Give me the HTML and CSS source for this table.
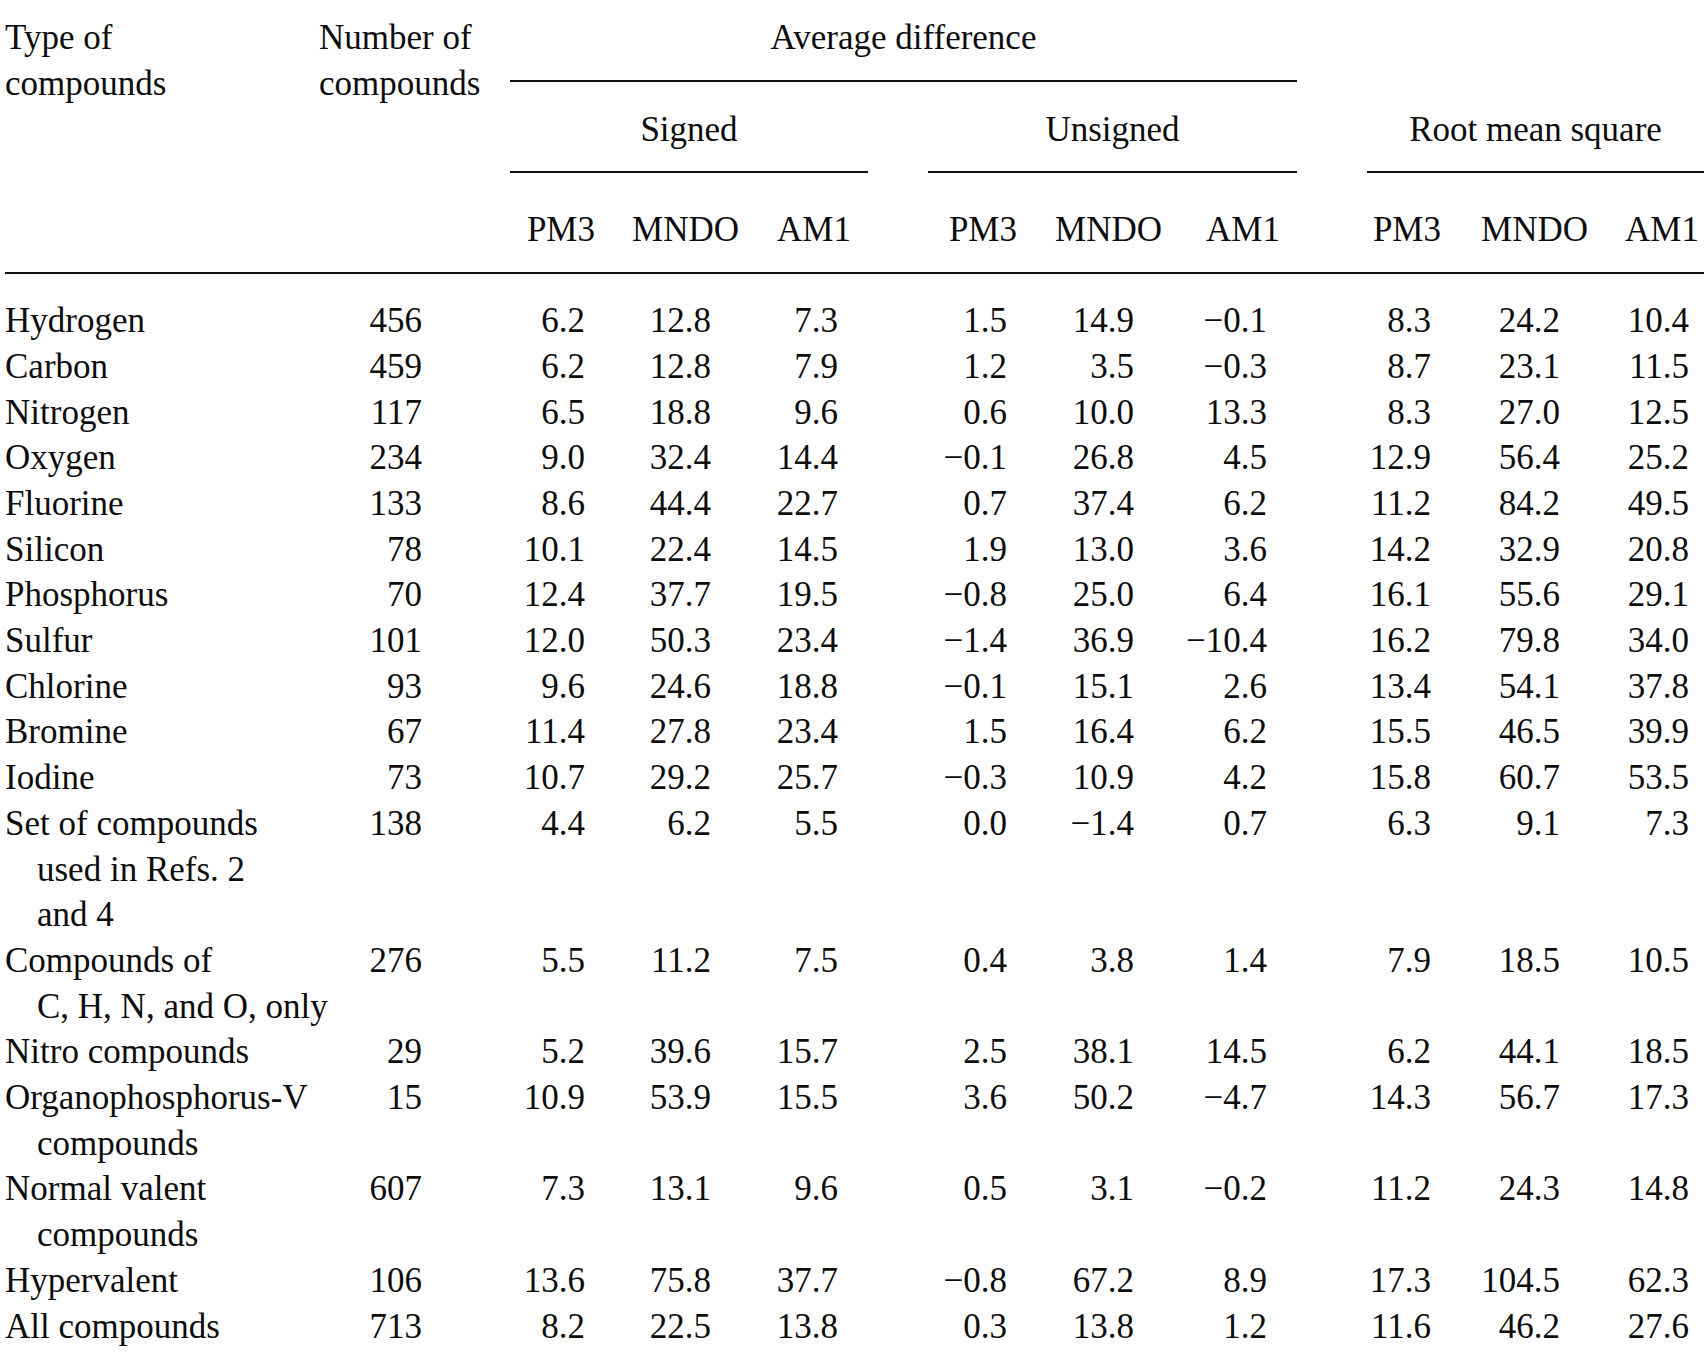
FILE: index.html
```html
<!DOCTYPE html>
<html lang="en">
<head>
<meta charset="utf-8">
<title>Average differences of heats of formation</title>
<link rel="stylesheet" href="styles.css">
</head>
<body>
<table class="results">
  <colgroup>
    <col class="w-type"><col class="w-count">
    <col class="w-s1"><col class="w-s2"><col class="w-s3"><col class="w-gap1">
    <col class="w-u1"><col class="w-u2"><col class="w-u3"><col class="w-gap2">
    <col class="w-r1"><col class="w-r2"><col class="w-r3">
  </colgroup>
  <thead>
    <tr class="h1">
      <th class="type" rowspan="3">Type of<br>compounds</th>
      <th class="count-head" rowspan="3">Number of<br>compounds</th>
      <th class="group" colspan="7">Average difference</th>
      <th class="blank" colspan="4"></th>
    </tr>
    <tr class="h2">
      <th class="group" colspan="3">Signed</th>
      <th class="blank"></th>
      <th class="group" colspan="3">Unsigned</th>
      <th class="blank"></th>
      <th class="group" colspan="3">Root mean square</th>
    </tr>
    <tr class="h3">
      <th class="m pm3">PM3</th><th class="m mndo">MNDO</th><th class="m am1">AM1</th><th class="m"></th>
      <th class="m pm3">PM3</th><th class="m mndo">MNDO</th><th class="m am1">AM1</th><th class="m"></th>
      <th class="m pm3">PM3</th><th class="m mndo">MNDO</th><th class="m am1 last">AM1</th>
    </tr>
  </thead>
  <tbody>
    <tr><td class="label">Hydrogen</td><td class="count">456</td><td class="n">6.2</td><td class="n">12.8</td><td class="n">7.3</td><td></td><td class="n">1.5</td><td class="n">14.9</td><td class="n">&minus;0.1</td><td></td><td class="n">8.3</td><td class="n">24.2</td><td class="n last">10.4</td></tr>
    <tr><td class="label">Carbon</td><td class="count">459</td><td class="n">6.2</td><td class="n">12.8</td><td class="n">7.9</td><td></td><td class="n">1.2</td><td class="n">3.5</td><td class="n">&minus;0.3</td><td></td><td class="n">8.7</td><td class="n">23.1</td><td class="n last">11.5</td></tr>
    <tr><td class="label">Nitrogen</td><td class="count">117</td><td class="n">6.5</td><td class="n">18.8</td><td class="n">9.6</td><td></td><td class="n">0.6</td><td class="n">10.0</td><td class="n">13.3</td><td></td><td class="n">8.3</td><td class="n">27.0</td><td class="n last">12.5</td></tr>
    <tr><td class="label">Oxygen</td><td class="count">234</td><td class="n">9.0</td><td class="n">32.4</td><td class="n">14.4</td><td></td><td class="n">&minus;0.1</td><td class="n">26.8</td><td class="n">4.5</td><td></td><td class="n">12.9</td><td class="n">56.4</td><td class="n last">25.2</td></tr>
    <tr><td class="label">Fluorine</td><td class="count">133</td><td class="n">8.6</td><td class="n">44.4</td><td class="n">22.7</td><td></td><td class="n">0.7</td><td class="n">37.4</td><td class="n">6.2</td><td></td><td class="n">11.2</td><td class="n">84.2</td><td class="n last">49.5</td></tr>
    <tr><td class="label">Silicon</td><td class="count">78</td><td class="n">10.1</td><td class="n">22.4</td><td class="n">14.5</td><td></td><td class="n">1.9</td><td class="n">13.0</td><td class="n">3.6</td><td></td><td class="n">14.2</td><td class="n">32.9</td><td class="n last">20.8</td></tr>
    <tr><td class="label">Phosphorus</td><td class="count">70</td><td class="n">12.4</td><td class="n">37.7</td><td class="n">19.5</td><td></td><td class="n">&minus;0.8</td><td class="n">25.0</td><td class="n">6.4</td><td></td><td class="n">16.1</td><td class="n">55.6</td><td class="n last">29.1</td></tr>
    <tr><td class="label">Sulfur</td><td class="count">101</td><td class="n">12.0</td><td class="n">50.3</td><td class="n">23.4</td><td></td><td class="n">&minus;1.4</td><td class="n">36.9</td><td class="n">&minus;10.4</td><td></td><td class="n">16.2</td><td class="n">79.8</td><td class="n last">34.0</td></tr>
    <tr><td class="label">Chlorine</td><td class="count">93</td><td class="n">9.6</td><td class="n">24.6</td><td class="n">18.8</td><td></td><td class="n">&minus;0.1</td><td class="n">15.1</td><td class="n">2.6</td><td></td><td class="n">13.4</td><td class="n">54.1</td><td class="n last">37.8</td></tr>
    <tr><td class="label">Bromine</td><td class="count">67</td><td class="n">11.4</td><td class="n">27.8</td><td class="n">23.4</td><td></td><td class="n">1.5</td><td class="n">16.4</td><td class="n">6.2</td><td></td><td class="n">15.5</td><td class="n">46.5</td><td class="n last">39.9</td></tr>
    <tr><td class="label">Iodine</td><td class="count">73</td><td class="n">10.7</td><td class="n">29.2</td><td class="n">25.7</td><td></td><td class="n">&minus;0.3</td><td class="n">10.9</td><td class="n">4.2</td><td></td><td class="n">15.8</td><td class="n">60.7</td><td class="n last">53.5</td></tr>
    <tr><td class="label">Set of compounds<br>used in Refs. 2<br>and 4</td><td class="count">138</td><td class="n">4.4</td><td class="n">6.2</td><td class="n">5.5</td><td></td><td class="n">0.0</td><td class="n">&minus;1.4</td><td class="n">0.7</td><td></td><td class="n">6.3</td><td class="n">9.1</td><td class="n last">7.3</td></tr>
    <tr><td class="label">Compounds of<br>C, H, N, and O, only</td><td class="count">276</td><td class="n">5.5</td><td class="n">11.2</td><td class="n">7.5</td><td></td><td class="n">0.4</td><td class="n">3.8</td><td class="n">1.4</td><td></td><td class="n">7.9</td><td class="n">18.5</td><td class="n last">10.5</td></tr>
    <tr><td class="label">Nitro compounds</td><td class="count">29</td><td class="n">5.2</td><td class="n">39.6</td><td class="n">15.7</td><td></td><td class="n">2.5</td><td class="n">38.1</td><td class="n">14.5</td><td></td><td class="n">6.2</td><td class="n">44.1</td><td class="n last">18.5</td></tr>
    <tr><td class="label">Organophosphorus-V<br>compounds</td><td class="count">15</td><td class="n">10.9</td><td class="n">53.9</td><td class="n">15.5</td><td></td><td class="n">3.6</td><td class="n">50.2</td><td class="n">&minus;4.7</td><td></td><td class="n">14.3</td><td class="n">56.7</td><td class="n last">17.3</td></tr>
    <tr><td class="label">Normal valent<br>compounds</td><td class="count">607</td><td class="n">7.3</td><td class="n">13.1</td><td class="n">9.6</td><td></td><td class="n">0.5</td><td class="n">3.1</td><td class="n">&minus;0.2</td><td></td><td class="n">11.2</td><td class="n">24.3</td><td class="n last">14.8</td></tr>
    <tr><td class="label">Hypervalent</td><td class="count">106</td><td class="n">13.6</td><td class="n">75.8</td><td class="n">37.7</td><td></td><td class="n">&minus;0.8</td><td class="n">67.2</td><td class="n">8.9</td><td></td><td class="n">17.3</td><td class="n">104.5</td><td class="n last">62.3</td></tr>
    <tr><td class="label">All compounds</td><td class="count">713</td><td class="n">8.2</td><td class="n">22.5</td><td class="n">13.8</td><td></td><td class="n">0.3</td><td class="n">13.8</td><td class="n">1.2</td><td></td><td class="n">11.6</td><td class="n">46.2</td><td class="n last">27.6</td></tr>
  </tbody>
</table>
</body>
</html>
```

FILE: styles.css
```css
html, body {
  margin: 0;
  padding: 0;
  background: #ffffff;
}

body {
  font-family: "Liberation Serif", "Times New Roman", serif;
  font-size: 35px;
  color: #0d0d0d;
  overflow: hidden;
}

.results {
  border-collapse: separate;
  border-spacing: 0;
  table-layout: fixed;
  width: 1699px;
  margin-left: 5px;
  line-height: 45.7px;
}

.w-type  { width: 314px; }
.w-count { width: 191px; }
.w-s1 { width: 105px; }
.w-s2 { width: 126px; }
.w-s3 { width: 127px; }
.w-gap1 { width: 60px; }
.w-u1 { width: 109px; }
.w-u2 { width: 127px; }
.w-u3 { width: 133px; }
.w-gap2 { width: 70px; }
.w-r1 { width: 94px; }
.w-r2 { width: 129px; }
.w-r3 { width: 114px; }

th {
  font-weight: normal;
  padding: 0;
  vertical-align: top;
  white-space: nowrap;
}

td {
  padding: 0;
  vertical-align: top;
  white-space: nowrap;
}

/* header */
.type,
.count-head {
  text-align: left;
  padding-top: 15px;
  border-bottom: 2px solid #111111;
}

.h1 .group {
  text-align: center;
  padding: 15px 0 19px;
  border-bottom: 2px solid #111111;
}

.h1 .blank {
  padding: 15px 0 19px;
}

.h2 .group {
  text-align: center;
  padding: 25px 0 19px;
  border-bottom: 2px solid #111111;
}

.h2 .blank {
  padding: 25px 0 19px;
}

.h3 .m {
  text-align: right;
  padding-top: 34px;
  padding-bottom: 19px;
  border-bottom: 2px solid #111111;
}

.h3 .pm3 { padding-right: 20px; }
.h3 .mndo { padding-right: 2px; }
.h3 .am1 { padding-right: 17px; }
.h3 .am1.last { padding-right: 5px; }

/* body */
tbody tr:first-child td {
  padding-top: 24px;
}

.label {
  text-align: left;
  padding-left: 32px;
  text-indent: -32px;
}

.count {
  text-align: right;
  padding-right: 88px;
}

.n {
  text-align: right;
  padding-right: 30px;
}

.n.last {
  padding-right: 15px;
}
```
